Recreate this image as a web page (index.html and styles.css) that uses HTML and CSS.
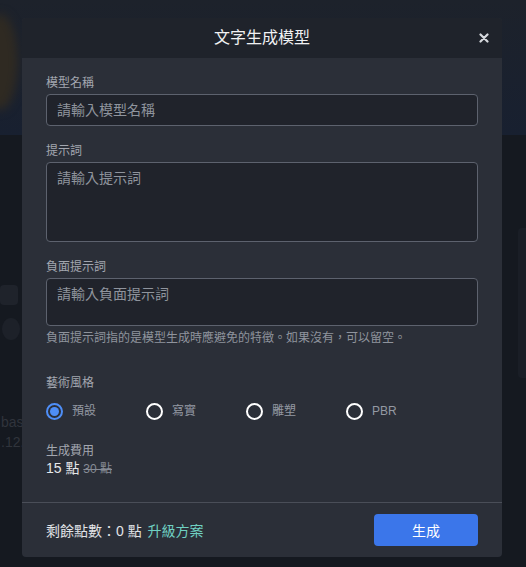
FILE: index.html
```html
<!DOCTYPE html>
<html lang="zh-Hant">
<head>
    <meta charset="UTF-8">
    <meta name="viewport" content="width=device-width, initial-scale=1.0">
    <title>文字生成模型</title>
    <link rel="stylesheet" href="styles.css">
</head>
<body>
    <div class="backdrop">
        <div class="bg-top"></div>
        <div class="bg-blob"></div>
        <div class="bg-pill"></div>
        <div class="bg-dot"></div>
        <div class="bg-text">bas<br>.12.</div>
        <div class="bg-card"></div>
    </div>

    <div class="overlay">
        <div class="modal">
            <div class="modal-header">
                <h1>文字生成模型</h1>
                <button type="button" class="close" aria-label="關閉">
                    <svg width="10" height="10" viewBox="0 0 10 10">
                        <path d="M1.5 1.5 L8.5 8.5 M8.5 1.5 L1.5 8.5" stroke="#d6d9de" stroke-width="2.2" stroke-linecap="round"/>
                    </svg>
                </button>
            </div>

            <form class="modal-body">
                <div class="field">
                    <label for="name">模型名稱</label>
                    <input type="text" id="name" placeholder="請輸入模型名稱">
                </div>

                <div class="field">
                    <label for="prompt">提示詞</label>
                    <textarea id="prompt" class="tall" placeholder="請輸入提示詞"></textarea>
                </div>

                <div class="field">
                    <label for="negative">負面提示詞</label>
                    <textarea id="negative" class="short" placeholder="請輸入負面提示詞"></textarea>
                    <p class="hint">負面提示詞指的是模型生成時應避免的特徵。如果沒有，可以留空。</p>
                </div>

                <div class="field style-field">
                    <span class="label">藝術風格</span>
                    <div class="radios">
                        <label class="radio checked"><span class="dot"></span>預設</label>
                        <label class="radio"><span class="dot"></span>寫實</label>
                        <label class="radio"><span class="dot"></span>雕塑</label>
                        <label class="radio"><span class="dot"></span>PBR</label>
                    </div>
                </div>

                <div class="cost">
                    <span class="label">生成費用</span>
                    <div class="price">15 點 <s>30 點</s></div>
                </div>
            </form>

            <div class="modal-footer">
                <div class="balance">剩餘點數：0 點 <a href="#">升級方案</a></div>
                <button type="button" class="submit">生成</button>
            </div>
        </div>
    </div>
</body>
</html>
```

FILE: styles.css
```css
* {
    box-sizing: border-box;
}
body {
    margin: 0;
    padding: 0;
    width: 526px;
    height: 567px;
    overflow: hidden;
    background: #151920;
    font-family: "Liberation Sans", "Noto Sans CJK TC", sans-serif;
    color: #a3a7b0;
    position: relative;
}

/* blurred page behind the dialog */
.backdrop {
    position: absolute;
    inset: 0;
    overflow: hidden;
}
.bg-top {
    position: absolute;
    left: 0;
    top: 0;
    width: 526px;
    height: 135px;
    background: linear-gradient(180deg, #1d222b 0%, #182030 100%);
}
.bg-blob {
    position: absolute;
    left: -18px;
    top: 14px;
    width: 36px;
    height: 96px;
    border-radius: 50%;
    background: #2f2a22;
    filter: blur(5px);
}
.bg-pill {
    position: absolute;
    left: 0;
    top: 285px;
    width: 18px;
    height: 20px;
    border-radius: 4px;
    background: #1f232b;
}
.bg-dot {
    position: absolute;
    left: 2px;
    top: 318px;
    width: 18px;
    height: 22px;
    border-radius: 50%;
    background: #1d2129;
}
.bg-text {
    position: absolute;
    left: 1px;
    top: 412px;
    font-size: 14px;
    line-height: 20px;
    color: #30343c;
}
.bg-card {
    position: absolute;
    left: 518px;
    top: 228px;
    width: 20px;
    height: 150px;
    border-radius: 4px;
    background: #1a1e26;
}

.overlay {
    position: relative;
    padding: 18px 24px 0 22px;
}
.modal {
    width: 480px;
    background: #2b2f38;
    border-radius: 4px;
    overflow: hidden;
}
.modal-header {
    height: 40px;
    background: #1f232b;
    display: flex;
    align-items: center;
    justify-content: center;
    position: relative;
}
.modal-header h1 {
    margin: 0;
    font-size: 16px;
    font-weight: normal;
    color: #f0f1f3;
    line-height: 20px;
}
.close {
    position: absolute;
    right: 13px;
    top: 15px;
    width: 10px;
    height: 10px;
    padding: 0;
    border: none;
    background: none;
    display: flex;
}

.modal-body {
    padding: 16px 24px 24px;
    border-bottom: 1px solid #4a4e58;
}
.field {
    margin-bottom: 16px;
}
.field label,
.label {
    display: block;
    font-size: 12px;
    line-height: 18px;
    margin-bottom: 2px;
    color: #a3a7b0;
}
input,
textarea {
    display: block;
    width: 100%;
    margin: 0;
    background: #20232b;
    border: 1px solid #5d626e;
    border-radius: 4px;
    color: #d0d3d8;
    font-family: inherit;
    font-size: 14px;
    padding: 0 10px;
    resize: none;
    outline: none;
}
input {
    height: 32px;
}
textarea {
    padding-top: 5px;
    line-height: 20px;
}
textarea.tall {
    height: 80px;
}
textarea.short {
    height: 48px;
}
input::placeholder,
textarea::placeholder {
    color: #8f949d;
}
.hint {
    margin: 3px 0 0;
    font-size: 12px;
    line-height: 18px;
    color: #8f949d;
}
.style-field {
    margin-top: 27px;
    margin-bottom: 22px;
}
.radios {
    display: flex;
    margin-top: 9px;
    height: 20px;
}
.radio {
    width: 100px;
    display: flex !important;
    align-items: center;
    gap: 9px;
    font-size: 12px;
    line-height: 20px;
    margin: 0 !important;
    color: #9499a3 !important;
}
.dot {
    width: 17px;
    height: 17px;
    border-radius: 50%;
    border: 2px solid #ffffff;
    flex: none;
    position: relative;
}
.radio.checked .dot {
    border-color: #4e8ef7;
}
.radio.checked .dot::after {
    content: "";
    position: absolute;
    left: 2px;
    top: 2px;
    width: 9px;
    height: 9px;
    border-radius: 50%;
    background: #4e8ef7;
}
.cost .label {
    line-height: 16px;
    margin: 0;
}
.price {
    font-size: 14px;
    line-height: 18px;
    color: #e6e8eb;
}
.price s {
    font-size: 12px;
    color: #868b95;
}

.modal-footer {
    height: 54px;
    padding: 0 24px;
    display: flex;
    align-items: center;
    justify-content: space-between;
}
.balance {
    font-size: 14px;
    color: #e2e4e8;
}
.balance a {
    color: #6fd0c2;
    text-decoration: none;
    margin-left: 2px;
}
.submit {
    width: 104px;
    height: 32px;
    background: #3b76ea;
    color: #ffffff;
    border: none;
    border-radius: 4px;
    font-family: inherit;
    font-size: 14px;
    cursor: pointer;
}
```
